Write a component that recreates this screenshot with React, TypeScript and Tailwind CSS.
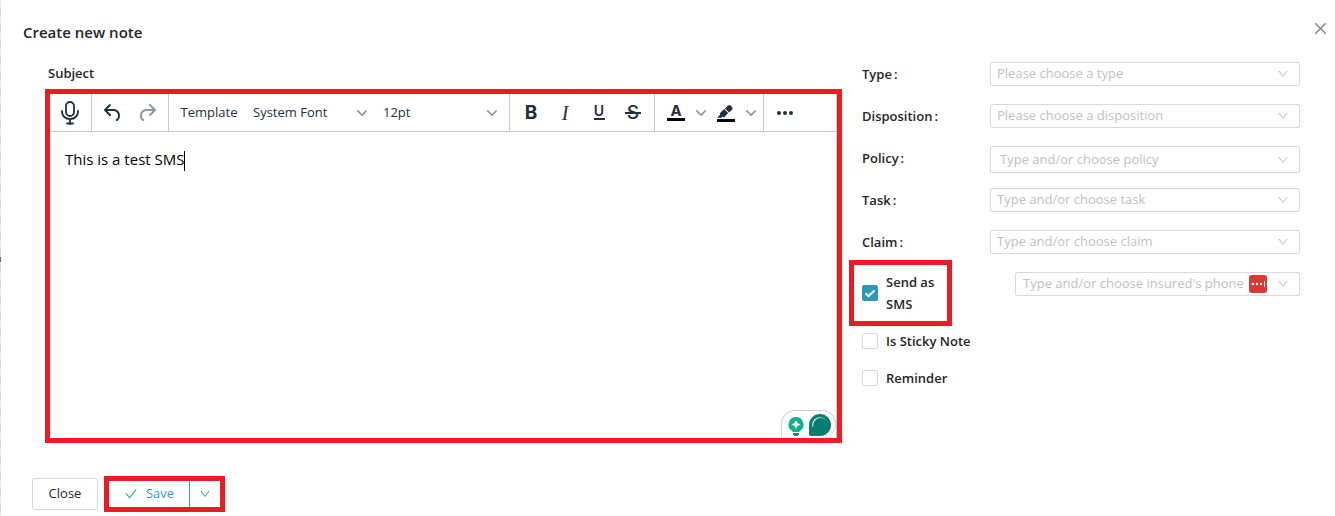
import React from 'react'
import { AiOutlineCheck, AiOutlineClose, AiOutlineDown } from 'react-icons/ai'

const fields = [
  { id: 'type', label: 'Type', placeholder: 'Please choose a type', select: true, box: 'h-6 pl-1.5' },
  { id: 'disposition', label: 'Disposition', placeholder: 'Please choose a disposition', select: true, box: 'h-6 pl-1.5' },
  { id: 'policy', label: 'Policy', placeholder: 'Type and/or choose policy', select: false, box: 'h-[27px] pl-[9px]' },
  { id: 'task', label: 'Task', placeholder: 'Type and/or choose task', select: false, box: 'h-6 pl-1.5' },
  { id: 'claim', label: 'Claim', placeholder: 'Type and/or choose claim', select: false, box: 'h-6 pl-1.5' },
]

const boxStyle = 'flex flex-1 items-center rounded-xs border border-[#d9d9d9] bg-white pr-[10px] text-[#bfbfbf]'
const inputStyle = 'min-w-0 flex-1 appearance-none bg-transparent text-[#bfbfbf] outline-none placeholder:text-[#bfbfbf]'

function SmallChevron() {
  return (
    <svg width="10" height="10" viewBox="0 0 10 10" fill="#8f969f" className="shrink-0">
      <path d="M8.7 2.2c.3-.3.8-.3 1 0 .4.4.4.9 0 1.2L5.7 7.8c-.3.3-.9.3-1.2 0L.2 3.4a.8.8 0 0 1 0-1.2c.3-.3.8-.3 1.1 0L5 6l3.7-3.8Z" />
    </svg>
  )
}

function ToolButton({ label, children }: { label: string; children: React.ReactNode }) {
  return (
    <button type="button" aria-label={label} className="flex h-7 w-[34px] items-center justify-center">
      {children}
    </button>
  )
}

function DropButton({ label }: { label: string }) {
  return (
    <button type="button" aria-label={label} className="flex h-7 w-4 items-center justify-center">
      <SmallChevron />
    </button>
  )
}

function Toolbar() {
  return (
    <div className="flex h-[38px] overflow-hidden border-b border-[#c8c8c8] text-[#222f3e]">
      <div className="flex items-center border-r border-[#c8c8c8] pr-1 pl-[3px]">
        <ToolButton label="Dictate">
          <svg width="20" height="26" viewBox="0 0 20 26" fill="none" stroke="currentColor" strokeWidth="1.8">
            <rect x="6" y="2" width="8" height="14" rx="4" />
            <path d="M2 11v1c0 4 3.500 7 8 7s8-3 8-7v-1M10 19v5M7 23.500h6" strokeLinecap="round" />
          </svg>
        </ToolButton>
      </div>
      <div className="flex items-center border-r border-[#c8c8c8] px-1">
        <ToolButton label="Undo">
          <svg width="24" height="24" viewBox="0 0 24 24" fill="currentColor">
            <path d="M6.4 8H12c3.7 0 6.200 2 6.800 5.100.6 2.700-.4 5.600-2.300 6.800a1 1 0 0 1-1-1.800c1.100-.6 1.800-2.700 1.400-4.600-.5-2.100-2.100-3.500-4.900-3.500H6.400l3.300 3.300a1 1 0 1 1-1.400 1.400l-5-5a1 1 0 0 1 0-1.400l5-5a1 1 0 0 1 1.400 1.400L6.400 8Z" />
          </svg>
        </ToolButton>
        <ToolButton label="Redo">
          <svg width="24" height="24" viewBox="0 0 24 24" fill="currentColor" className="opacity-50">
            <path d="M17.6 10H12c-2.800 0-4.400 1.400-4.900 3.500-.4 2 .3 4 1.400 4.600a1 1 0 1 1-1 1.800c-2-1.200-2.900-4.100-2.300-6.800.6-3 3-5.100 6.800-5.100h5.600l-3.300-3.300a1 1 0 1 1 1.400-1.400l5 5a1 1 0 0 1 0 1.400l-5 5a1 1 0 0 1-1.400-1.400l3.300-3.300Z" />
          </svg>
        </ToolButton>
      </div>
      <div className="flex items-center border-r border-[#c8c8c8] px-1">
        <button type="button" className="h-7 w-[72px] text-center">Template</button>
        <button type="button" className="flex h-7 w-[130px] items-center justify-between px-2">
          System Font
          <SmallChevron />
        </button>
        <button type="button" className="flex h-7 w-[130px] items-center justify-between px-2">
          12pt
          <SmallChevron />
        </button>
      </div>
      <div className="flex items-center border-r border-[#c8c8c8] px-1">
        <ToolButton label="Bold">
          <span className="font-[Inter] text-[19px] leading-6 font-bold">B</span>
        </ToolButton>
        <ToolButton label="Italic">
          <span className="font-['Liberation_Serif'] text-xl leading-6 italic">I</span>
        </ToolButton>
        <ToolButton label="Underline">
          <span className="flex h-[14px] w-[11px] items-start justify-center border-b-2 border-current font-[Inter] text-sm leading-[10px] font-semibold">U</span>
        </ToolButton>
        <ToolButton label="Strikethrough">
          <span className="grid w-4 place-items-center">
            <span className="col-start-1 row-start-1 font-[Inter] text-[19px] leading-6 font-medium">S</span>
            <span className="col-start-1 row-start-1 h-0.5 w-4 bg-current" />
          </span>
        </ToolButton>
      </div>
      <div className="flex items-center border-r border-[#c8c8c8] px-1">
        <ToolButton label="Text color">
          <span className="flex h-4 w-[18px] items-start justify-center border-b-3 border-black font-[Inter] text-[15px] leading-[12px] font-bold">A</span>
        </ToolButton>
        <DropButton label="Text color menu" />
        <ToolButton label="Background color">
          <svg width="24" height="24" viewBox="0 0 24 24" fill="currentColor">
            <path d="M3 18h18v3H3z" fill="#000" />
            <path d="M7.700 16.700H3l3.300-3.300-.7-.8L10.200 8l4 4.100-4 4.200c-.2.2-.6.2-.8 0l-.6-.7-1.100 1.100zm5-7.500L11 7.400l3-2.900a2 2 0 0 1 2.600 0L18 6c.7.7.7 2 0 2.700l-2.900 2.900-1.800-1.800-.5-.6" />
          </svg>
        </ToolButton>
        <DropButton label="Background color menu" />
      </div>
      <div className="flex items-center px-1">
        <ToolButton label="More">
          <svg width="18" height="6" viewBox="0 0 18 6" fill="currentColor">
            <circle cx="3" cy="3" r="2" />
            <circle cx="9" cy="3" r="2" />
            <circle cx="15" cy="3" r="2" />
          </svg>
        </ToolButton>
      </div>
    </div>
  )
}

function Editor() {
  return (
    <div className="relative flex h-[354px] flex-col border-5 border-[#ed1c24]">
      <div className="flex flex-1 flex-col border-r border-[#c8c8c8]">
        <Toolbar />
        <div
          role="textbox"
          aria-labelledby="subject"
          aria-multiline="true"
          contentEditable
          suppressContentEditableWarning
          className="flex-1 px-[15px] py-[15px] text-[15px] leading-6 text-black outline-none"
        >
          This is a test SMS<span className="inline-block h-5 w-px bg-black align-middle" />
        </div>
      </div>
      {/* writing assistant */}
      <div className="absolute right-px bottom-0 flex h-7 w-[55px] items-start gap-1 overflow-hidden rounded-t-[16px] rounded-br-[16px] border border-b-0 border-[#cdcfdd] bg-white pt-[3px] pl-[5px]">
        <svg width="18" height="22" viewBox="0 0 18 22">
          <path d="M9 3a7.500 7.500 0 0 0-4.500 13.500L6 18h6l1.500-1.500A7.500 7.500 0 0 0 9 3Z" fill="#10b08b" />
          <path d="M6 19h6v1.500l-1.500 1.500h-3L6 20.500Z" fill="#0a8f75" />
          <path d="M9 6l1.400 3.100L13.500 10.500l-3.100 1.400L9 15l-1.400-3.100L4.500 10.500l3.100-1.400Z" fill="#fff" />
        </svg>
        <svg width="22" height="22" viewBox="0 0 22 22">
          <path d="M11 0a11 11 0 0 1 0 22H2a2 2 0 0 1-2-2v-9A11 11 0 0 1 11 0Z" fill="#087f6e" />
          <path d="M3.500 12A8 8 0 0 1 11.500 3.500" fill="none" stroke="#d5efe9" strokeWidth="1.200" strokeLinecap="round" />
          <path d="M11.500 3.500a8 8 0 0 1 5 2" fill="none" stroke="#5fb5a6" strokeWidth="1" />
        </svg>
      </div>
    </div>
  )
}

function CheckBox({ id, label, checked = false }: { id: string; label: string; checked?: boolean }) {
  return (
    <label htmlFor={id} className="flex items-center gap-2 leading-[22px] font-semibold">
      <span className="grid shrink-0">
        <input
          id={id}
          type="checkbox"
          defaultChecked={checked}
          className="peer col-start-1 row-start-1 size-4 appearance-none rounded-xs border border-[#d9d9d9] bg-white checked:border-[#2a9bb5] checked:bg-[#2a9bb5]"
        />
        <svg viewBox="0 0 16 16" className="pointer-events-none invisible col-start-1 row-start-1 size-4 peer-checked:visible" fill="none" stroke="#fff" strokeWidth="2">
          <path d="M3.500 8.200l3 3 6-5.700" />
        </svg>
      </span>
      {label}
    </label>
  )
}

function Details() {
  return (
    <div className="w-full lg:w-[438px]">
      {fields.map((f) => (
        <div key={f.id} className="flex h-[42px] items-start">
          <label htmlFor={f.id} className="flex w-32 gap-0.5 leading-6 font-semibold">
            {f.label}
            <span>:</span>
          </label>
          <div className={`${boxStyle} ${f.box}`}>
            {f.select ? (
              <select id={f.id} className={inputStyle}>
                <option>{f.placeholder}</option>
              </select>
            ) : (
              <input id={f.id} type="text" placeholder={f.placeholder} className={inputStyle} />
            )}
            <AiOutlineDown size={12} />
          </div>
        </div>
      ))}
      <section className="-mt-3">
        <div className="flex items-start">
          <div className="-ml-[13px] flex h-[66px] w-[103px] items-center border-5 border-[#ed1c24] pl-2">
            <CheckBox id="sms" label="Send as SMS" checked />
          </div>
          <div className={`${boxStyle} mt-3 ml-[63px] h-6 pl-[7px]`}>
            <input id="phone" type="text" aria-label="Insured's phone" placeholder="Type and/or choose insured's phone" className={inputStyle} />
            <svg width="18" height="18" viewBox="0 0 18 18" className="mr-[10px] shrink-0">
              <rect width="18" height="18" rx="3" fill="#d93a37" />
              <circle cx="4" cy="9" r="1.200" fill="#fff" />
              <circle cx="8" cy="9" r="1.200" fill="#fff" />
              <circle cx="12" cy="9" r="1.200" fill="#fff" />
              <path d="M15.500 6v6" stroke="#fff" />
            </svg>
            <AiOutlineDown size={12} />
          </div>
        </div>
        <div className="mt-1 flex flex-col items-start gap-[15px]">
          <CheckBox id="sticky" label="Is Sticky Note" />
          <CheckBox id="reminder" label="Reminder" />
        </div>
      </section>
    </div>
  )
}

export default function App() {
  return (
    <div className="flex min-h-screen bg-white font-['Open_Sans','Noto_Sans',sans-serif] text-[13px] text-[#262626]">
      <div className="flex w-px shrink-0 flex-col bg-[repeating-linear-gradient(#e6e6e6_0_8px,#d6d6d6_8px_16px)]">
        <span className="mt-[257px] h-[5px] bg-[#666]" />
      </div>
      <main className="min-w-0 flex-1">
        <header className="flex items-start justify-between pt-5 pr-1.5 pl-[22px]">
          <h1 className="text-[15px] leading-6 font-semibold">Create new note</h1>
          <button type="button" aria-label="Close dialog" className="flex h-4 items-center text-[#808080]">
            <AiOutlineClose size={17} />
          </button>
        </header>

        <div className="flex flex-col gap-5 pt-[18px] pr-[35px] pl-11 lg:flex-row">
          <div className="min-w-0 flex-1">
            <div id="subject" className="h-[27px] pl-[3px] leading-[22px] font-semibold">Subject</div>
            <Editor />
          </div>
          <Details />
        </div>

        <footer className="flex items-center gap-[6px] pt-[33px] pl-[31px]">
          <button type="button" className="h-8 w-[66px] rounded-xs border border-[#d9d9d9]">Close</button>
          <div className="flex h-9 border-5 border-[#ed1c24] text-[#2a9fb8]">
            <button type="button" className="flex w-[81px] items-center justify-center gap-2 border-r border-[#2a9fb8]">
              <AiOutlineCheck size={14} />
              Save
            </button>
            <button type="button" aria-label="More save options" className="flex w-[30px] items-center justify-center">
              <AiOutlineDown size={12} />
            </button>
          </div>
        </footer>
      </main>
    </div>
  )
}
